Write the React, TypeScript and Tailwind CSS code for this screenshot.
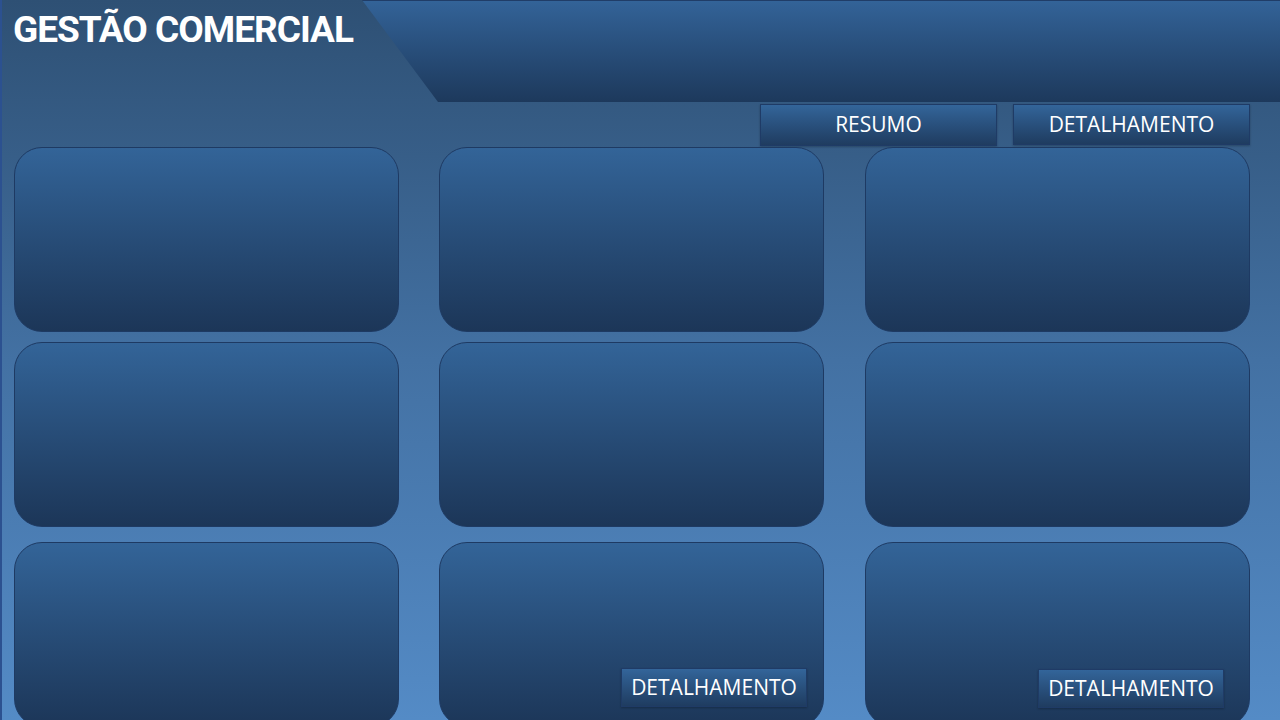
import React from 'react';

const btn =
  'flex items-center justify-center border border-[#1f3b66] bg-gradient-to-b from-[#33659a] to-[#1f3c60] text-white text-[21px] font-["Open_Sans",sans-serif] shadow-[0_1px_2px_rgba(0,0,0,0.25)]';

const Card = ({ children, className = '' }: { children?: React.ReactNode; className?: string }) => (
  <div
    className={
      'w-[385px] h-[185px] shrink-0 rounded-[28px] border border-[#1e3a63] bg-gradient-to-b from-[#336498] to-[#1c3658] ' +
      className
    }
  >
    {children}
  </div>
);

export default function App() {
  return (
    <div className="h-[720px] w-[1280px] overflow-hidden border-l-2 border-[#2c5190] bg-gradient-to-b from-[#2e5074] via-[#4371a3] to-[#548bc6]">
      {/* header */}
      <div className="flex h-[102px]">
        <div className="w-[360px] shrink-0 pl-[11px] pt-[5px]">
          <h1 className="whitespace-nowrap text-[37px] leading-[50px] font-bold tracking-[-1px] text-white font-['Roboto',sans-serif]">
            GESTÃO COMERCIAL
          </h1>
        </div>
        <div className="flex-1 border-t border-[#203d68] bg-gradient-to-b from-[#336398] to-[#1d395c] [clip-path:polygon(0_0,100%_0,100%_100%,76px_100%)]" />
      </div>

      {/* nav buttons */}
      <div className="mt-[2px] flex justify-end gap-[16px] pr-[30px]">
        <button className={btn + ' h-[42px] w-[237px]'}>RESUMO</button>
        <button className={btn + ' h-[41px] w-[237px]'}>DETALHAMENTO</button>
      </div>

      {/* cards */}
      <div className="mt-[1px] ml-[12px]">
        <div className="flex">
          <Card />
          <Card className="ml-[40px]" />
          <Card className="ml-[41px]" />
        </div>
        <div className="mt-[10px] flex">
          <Card />
          <Card className="ml-[40px]" />
          <Card className="ml-[41px]" />
        </div>
        <div className="mt-[15px] flex">
          <Card />
          <Card className="ml-[40px] flex items-end justify-end pb-[19px] pr-[16px]">
            <button className={btn + ' h-[39px] w-[186px]'}>DETALHAMENTO</button>
          </Card>
          <Card className="ml-[41px] flex items-end justify-end pb-[18px] pr-[25px]">
            <button className={btn + ' h-[39px] w-[186px]'}>DETALHAMENTO</button>
          </Card>
        </div>
      </div>
    </div>
  );
}
